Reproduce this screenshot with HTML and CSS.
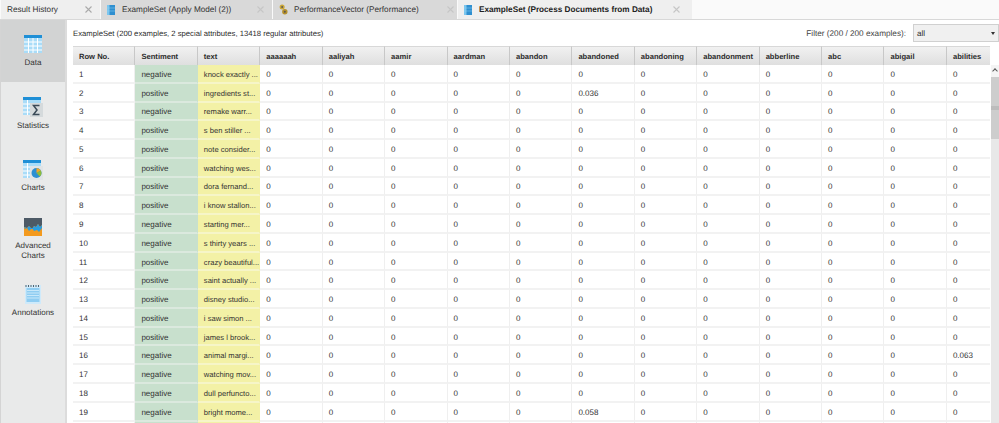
FILE: index.html
```html
<!DOCTYPE html>
<html lang="en">
<head>
<meta charset="utf-8">
<title>ExampleSet</title>
<link rel="stylesheet" href="styles.css">
</head>
<body>
<div class="app">
  <div class="tabbar">
    <div class="tab tab-history"><span class="tab-label">Result History</span><svg class="close" viewBox="0 0 7 7"><path d="M.5.5l6 6M6.500.5l-6 6"/></svg></div>
    <div class="tab tab-apply">
      <svg class="tab-icon" viewBox="0 0 8 10"><rect width="8" height="10" fill="#2f8fd0"/><rect width="2.500" height="10" fill="#7cc6ee"/><path d="M0 3h8M0 6h8" stroke="#8fd0f2" stroke-width=".5"/></svg>
      <span class="tab-label">ExampleSet (Apply Model (2))</span><svg class="close" viewBox="0 0 7 7"><path d="M.5.5l6 6M6.500.5l-6 6"/></svg></div>
    <div class="tab tab-perf">
      <svg class="tab-icon tab-icon-perf" viewBox="0 0 10 12"><circle cx="3.500" cy="3.200" r="2.800" fill="#c9a63a"/><circle cx="6.500" cy="8.500" r="3" fill="#b48f2a"/><circle cx="3.500" cy="3.200" r="1" fill="#555"/><circle cx="6.500" cy="8.500" r="1.100" fill="#555"/></svg>
      <span class="tab-label">PerformanceVector (Performance)</span><svg class="close" viewBox="0 0 7 7"><path d="M.5.5l6 6M6.500.5l-6 6"/></svg></div>
    <div class="tab tab-active tab-process">
      <svg class="tab-icon" viewBox="0 0 8 10"><rect width="8" height="10" fill="#2f8fd0"/><rect width="2.500" height="10" fill="#7cc6ee"/><path d="M0 3h8M0 6h8" stroke="#8fd0f2" stroke-width=".5"/></svg>
      <span class="tab-label">ExampleSet (Process Documents from Data)</span><svg class="close" viewBox="0 0 7 7"><path d="M.5.5l6 6M6.500.5l-6 6"/></svg></div>
    <div class="tab-rest"></div>
  </div>
  <div class="main">
    <nav class="sidebar">
      <div class="nav-item nav-active nav-data">
        <svg class="nav-icon" viewBox="0 0 18 18"><rect width="18" height="18" fill="#a9dcf8"/><rect width="18" height="3" fill="#1f8fd6"/><path d="M0 7h18M0 11h18M0 15h18M4.500 3v15M9 3v15M13.500 3v15" stroke="#fff" stroke-width="1"/></svg>
        <span>Data</span>
      </div>
      <div class="nav-item nav-stats">
        <svg class="nav-icon" viewBox="0 0 20 20"><rect width="18" height="18" fill="#a9dcf8"/><rect width="18" height="3" fill="#1f8fd6"/><path d="M0 7h18M0 11h18M0 15h18M4.500 3v15" stroke="#fff" stroke-width="1"/><rect x="7" y="6" width="13" height="14" fill="#d5dadc"/><path d="M16.500 8.500h-6l3.500 4.500-3.500 4.500h6" fill="none" stroke="#3b4a57" stroke-width="1.500"/></svg>
        <span>Statistics</span>
      </div>
      <div class="nav-item nav-charts">
        <svg class="nav-icon" viewBox="0 0 20 20"><rect width="18" height="18" fill="#a9dcf8"/><rect width="18" height="3" fill="#1f8fd6"/><path d="M0 7h18M0 11h18M0 15h18M4.500 3v15" stroke="#fff" stroke-width="1"/><rect x="7" y="6" width="13" height="14" fill="#e0e4e6"/><circle cx="13.500" cy="13" r="5" fill="#2b8fd2"/><path d="M13.500 13V8a5 5 0 0 1 4.300 2.500z" fill="#f5a623"/><path d="M13.500 13l4.300-2.500a5 5 0 0 1-1 6z" fill="#8dbb3a"/></svg>
        <span>Charts</span>
      </div>
      <div class="nav-item nav-adv">
        <svg class="nav-icon" viewBox="0 0 18 18"><rect width="18" height="18" fill="#f39a1e"/><path d="M0 0h18v7l-2 2-2-3-2 3-2-1-2 3-3-3-2 2-3-1z" fill="#4d5a66"/><path d="M0 9l3 1 2-2 3 3 2-3 2 1 2-3 2 3 2-2v3l-3 4-2-2-3 1-2-3-3 3-2-3-2 1z" fill="#2b9de0"/></svg>
        <span>Advanced<br>Charts</span>
      </div>
      <div class="nav-item nav-notes">
        <svg class="nav-icon nav-icon-notes" viewBox="0 0 16 20"><rect y="1" width="16" height="19" fill="#cfeafa"/><rect x="1.500" y="4" width="13" height="14" fill="#8fcdf2"/><path d="M2 6.500h12M2 9h12M2 11.500h12M2 14h12" stroke="#d7effb" stroke-width=".8"/><path d="M1 1v2M3.500 1v2M6 1v2M8.500 1v2M11 1v2M13.500 1v2" stroke="#55626c" stroke-width="1"/></svg>
        <span>Annotations</span>
      </div>
    </nav>
    <section class="content">
      <div class="toolbar">
        <span class="summary">ExampleSet (200 examples, 2 special attributes, 13418 regular attributes)</span>
        <span class="filter-label">Filter (200 / 200 examples):</span>
        <div class="select"><span>all</span><span class="arrow"></span></div>
      </div>
      <div class="table-wrap">
        <div class="grid">
          <div class="th">Row No.</div><div class="th">Sentiment</div><div class="th">text</div><div class="th">aaaaaah</div><div class="th">aaliyah</div><div class="th">aamir</div><div class="th">aardman</div><div class="th">abandon</div><div class="th">abandoned</div><div class="th">abandoning</div><div class="th">abandonment</div><div class="th">abberline</div><div class="th">abc</div><div class="th">abigail</div><div class="th">abilities</div>

          <div class="td">1</div><div class="td sent">negative</div><div class="td txt">knock exactly ...</div><div class="td">0</div><div class="td">0</div><div class="td">0</div><div class="td">0</div><div class="td">0</div><div class="td">0</div><div class="td">0</div><div class="td">0</div><div class="td">0</div><div class="td">0</div><div class="td">0</div><div class="td">0</div>
          <div class="td">2</div><div class="td sent">positive</div><div class="td txt">ingredients st...</div><div class="td">0</div><div class="td">0</div><div class="td">0</div><div class="td">0</div><div class="td">0</div><div class="td">0.036</div><div class="td">0</div><div class="td">0</div><div class="td">0</div><div class="td">0</div><div class="td">0</div><div class="td">0</div>
          <div class="td">3</div><div class="td sent">negative</div><div class="td txt">remake warr...</div><div class="td">0</div><div class="td">0</div><div class="td">0</div><div class="td">0</div><div class="td">0</div><div class="td">0</div><div class="td">0</div><div class="td">0</div><div class="td">0</div><div class="td">0</div><div class="td">0</div><div class="td">0</div>
          <div class="td">4</div><div class="td sent">positive</div><div class="td txt">s ben stiller ...</div><div class="td">0</div><div class="td">0</div><div class="td">0</div><div class="td">0</div><div class="td">0</div><div class="td">0</div><div class="td">0</div><div class="td">0</div><div class="td">0</div><div class="td">0</div><div class="td">0</div><div class="td">0</div>
          <div class="td">5</div><div class="td sent">positive</div><div class="td txt">note consider...</div><div class="td">0</div><div class="td">0</div><div class="td">0</div><div class="td">0</div><div class="td">0</div><div class="td">0</div><div class="td">0</div><div class="td">0</div><div class="td">0</div><div class="td">0</div><div class="td">0</div><div class="td">0</div>
          <div class="td">6</div><div class="td sent">positive</div><div class="td txt">watching wes...</div><div class="td">0</div><div class="td">0</div><div class="td">0</div><div class="td">0</div><div class="td">0</div><div class="td">0</div><div class="td">0</div><div class="td">0</div><div class="td">0</div><div class="td">0</div><div class="td">0</div><div class="td">0</div>
          <div class="td">7</div><div class="td sent">positive</div><div class="td txt">dora fernand...</div><div class="td">0</div><div class="td">0</div><div class="td">0</div><div class="td">0</div><div class="td">0</div><div class="td">0</div><div class="td">0</div><div class="td">0</div><div class="td">0</div><div class="td">0</div><div class="td">0</div><div class="td">0</div>
          <div class="td">8</div><div class="td sent">positive</div><div class="td txt">i know stallon...</div><div class="td">0</div><div class="td">0</div><div class="td">0</div><div class="td">0</div><div class="td">0</div><div class="td">0</div><div class="td">0</div><div class="td">0</div><div class="td">0</div><div class="td">0</div><div class="td">0</div><div class="td">0</div>
          <div class="td">9</div><div class="td sent">negative</div><div class="td txt">starting mer...</div><div class="td">0</div><div class="td">0</div><div class="td">0</div><div class="td">0</div><div class="td">0</div><div class="td">0</div><div class="td">0</div><div class="td">0</div><div class="td">0</div><div class="td">0</div><div class="td">0</div><div class="td">0</div>
          <div class="td">10</div><div class="td sent">negative</div><div class="td txt">s thirty years ...</div><div class="td">0</div><div class="td">0</div><div class="td">0</div><div class="td">0</div><div class="td">0</div><div class="td">0</div><div class="td">0</div><div class="td">0</div><div class="td">0</div><div class="td">0</div><div class="td">0</div><div class="td">0</div>
          <div class="td">11</div><div class="td sent">positive</div><div class="td txt">crazy beautiful...</div><div class="td">0</div><div class="td">0</div><div class="td">0</div><div class="td">0</div><div class="td">0</div><div class="td">0</div><div class="td">0</div><div class="td">0</div><div class="td">0</div><div class="td">0</div><div class="td">0</div><div class="td">0</div>
          <div class="td">12</div><div class="td sent">positive</div><div class="td txt">saint actually ...</div><div class="td">0</div><div class="td">0</div><div class="td">0</div><div class="td">0</div><div class="td">0</div><div class="td">0</div><div class="td">0</div><div class="td">0</div><div class="td">0</div><div class="td">0</div><div class="td">0</div><div class="td">0</div>
          <div class="td">13</div><div class="td sent">positive</div><div class="td txt">disney studio...</div><div class="td">0</div><div class="td">0</div><div class="td">0</div><div class="td">0</div><div class="td">0</div><div class="td">0</div><div class="td">0</div><div class="td">0</div><div class="td">0</div><div class="td">0</div><div class="td">0</div><div class="td">0</div>
          <div class="td">14</div><div class="td sent">positive</div><div class="td txt">i saw simon ...</div><div class="td">0</div><div class="td">0</div><div class="td">0</div><div class="td">0</div><div class="td">0</div><div class="td">0</div><div class="td">0</div><div class="td">0</div><div class="td">0</div><div class="td">0</div><div class="td">0</div><div class="td">0</div>
          <div class="td">15</div><div class="td sent">positive</div><div class="td txt">james l brook...</div><div class="td">0</div><div class="td">0</div><div class="td">0</div><div class="td">0</div><div class="td">0</div><div class="td">0</div><div class="td">0</div><div class="td">0</div><div class="td">0</div><div class="td">0</div><div class="td">0</div><div class="td">0</div>
          <div class="td">16</div><div class="td sent">negative</div><div class="td txt">animal margi...</div><div class="td">0</div><div class="td">0</div><div class="td">0</div><div class="td">0</div><div class="td">0</div><div class="td">0</div><div class="td">0</div><div class="td">0</div><div class="td">0</div><div class="td">0</div><div class="td">0</div><div class="td">0.063</div>
          <div class="td">17</div><div class="td sent">negative</div><div class="td txt">watching mov...</div><div class="td">0</div><div class="td">0</div><div class="td">0</div><div class="td">0</div><div class="td">0</div><div class="td">0</div><div class="td">0</div><div class="td">0</div><div class="td">0</div><div class="td">0</div><div class="td">0</div><div class="td">0</div>
          <div class="td">18</div><div class="td sent">negative</div><div class="td txt">dull perfuncto...</div><div class="td">0</div><div class="td">0</div><div class="td">0</div><div class="td">0</div><div class="td">0</div><div class="td">0</div><div class="td">0</div><div class="td">0</div><div class="td">0</div><div class="td">0</div><div class="td">0</div><div class="td">0</div>
          <div class="td">19</div><div class="td sent">negative</div><div class="td txt">bright mome...</div><div class="td">0</div><div class="td">0</div><div class="td">0</div><div class="td">0</div><div class="td">0</div><div class="td">0.058</div><div class="td">0</div><div class="td">0</div><div class="td">0</div><div class="td">0</div><div class="td">0</div><div class="td">0</div>
          <div class="td"></div><div class="td sent"></div><div class="td txt"></div><div class="td"></div><div class="td"></div><div class="td"></div><div class="td"></div><div class="td"></div><div class="td"></div><div class="td"></div><div class="td"></div><div class="td"></div><div class="td"></div><div class="td"></div><div class="td"></div>
        </div>
        <div class="scrollbar">
          <div class="scroll-up"><span class="chevron"></span></div>
          <div class="scroll-thumb"><span class="grip"></span></div>
        </div>
      </div>
    </section>
  </div>
</div>
</body>
</html>
```
FILE: styles.css
```css
* { box-sizing: border-box; }
html, body { margin: 0; height: 100%; overflow: hidden; }
body { font-family: "Liberation Sans", Arial, sans-serif; font-size: 8px; color: #2c2c2c; background: #fff; text-rendering: geometricPrecision; }
.app { width: 999px; height: 423px; display: flex; flex-direction: column; overflow: hidden; }

.tabbar { display: flex; height: 20px; flex: none; padding-left: 1px; background: #fafafa; border-bottom: 1px solid #d8d8d8; }
.tab { display: flex; align-items: center; height: 19px; background: #d9d9d9; margin-right: 1px; font-size: 8.200px; color: #333; padding-left: 6px; }
.tab-history { width: 99px; background: #efefef; }
.tab-apply { width: 171px; }
.tab-perf { width: 184px; }
.tab-process { width: 234px; }
.tab-active { background: #efefef; color: #222; font-weight: 700; }
.tab-rest { flex: 1; }
.tab-label { flex: 1; white-space: nowrap; }
.tab-icon { width: 8px; height: 10px; margin-right: 7px; flex: none; }
.tab-icon-perf { width: 9px; height: 11px; margin-right: 6px; }
.close { width: 7px; height: 7px; flex: none; margin-right: 8px; fill: none; stroke: #c6c6c6; stroke-width: 1.100; }
.tab-history .close { stroke: #aaa; }
.tab-perf .close { margin-right: 3px; }
.tab-process .close { margin-right: 12px; }

.main { display: flex; flex: 1; min-height: 0; }
.sidebar { width: 67px; flex: none; background: #e9eaea; border-right: 2px solid #dcdcdc; border-left: 1px solid #d4d4d4; display: flex; flex-direction: column; align-items: stretch; }
.nav-item { display: flex; flex-direction: column; align-items: center; text-align: center; line-height: 10px; color: #333; }
.nav-icon { width: 18px; height: 18px; flex: none; }
.nav-active { background: #d2d3d3; height: 62px; padding-top: 15px; gap: 5px; }
.nav-stats { margin-top: 15px; gap: 4px; }
.nav-stats .nav-icon, .nav-charts .nav-icon { width: 20px; height: 20px; }
.nav-charts { margin-top: 29px; gap: 3px; }
.nav-adv { margin-top: 25px; gap: 5px; }
.nav-notes { margin-top: 23px; gap: 4px; }
.nav-icon-notes { width: 16px; height: 20px; }

.content { flex: 1; min-width: 0; padding: 4px 0 0 6px; display: flex; flex-direction: column; }
.toolbar { display: flex; align-items: center; height: 18px; flex: none; margin-bottom: 4px; }
.summary { flex: 1; white-space: nowrap; font-size: 7.700px; }
.filter-label { margin-right: 7px; color: #444; font-size: 8.200px; }
.select { width: 86px; height: 18px; border: 1px solid #d0d0d0; background: #f0f0f0; display: flex; align-items: center; justify-content: space-between; padding: 0 3.500px 0 3px; }
.arrow { width: 0; height: 0; border-left: 2.500px solid transparent; border-right: 2.500px solid transparent; border-top: 3.500px solid #333; }

.table-wrap { flex: 1; min-height: 0; display: flex; overflow: hidden; }
.grid { display: grid; grid-template-columns: repeat(15, 62.430px); grid-template-rows: 19px; grid-auto-rows: 18.770px; width: 917px; flex: none; align-content: start; overflow: hidden; }
.th { background: linear-gradient(#f1f1f1, #dfdfdf); border-right: 1px solid #c8c8c8; border-top: 1px solid #d8d8d8; font-weight: 700; font-size: 7.600px; color: #2c2c2c; display: flex; align-items: center; padding-left: 6px; white-space: nowrap; overflow: hidden; }
.td { background: #fff; border-right: 1px solid #efefef; border-bottom: 2px solid #f2f2f2; display: flex; align-items: center; padding: 2px 0 0 6px; white-space: nowrap; overflow: hidden; color: #333; }
.sent { background: #c8e0cd; border-right-color: #c8e0cd; border-bottom-color: #dbe9de; }
.txt { background: #f3f1a6; border-right-color: #f3f1a6; border-bottom-color: #f6f5c8; font-size: 7.600px; }

.scrollbar { flex: 1; margin-top: 19px; margin-left: 1px; background: #e8e8e8; display: flex; flex-direction: column; }
.scroll-up { height: 12px; flex: none; background: #f4f4f4; display: flex; justify-content: center; padding-top: 4px; }
.chevron { width: 4px; height: 4px; border-left: 1px solid #555; border-top: 1px solid #555; transform: rotate(45deg); }
.scroll-thumb { height: 62px; background: #cdcdcd; display: flex; align-items: center; }
.grip { display: block; width: 100%; height: 4px; background: #bcbcbc; }
```
